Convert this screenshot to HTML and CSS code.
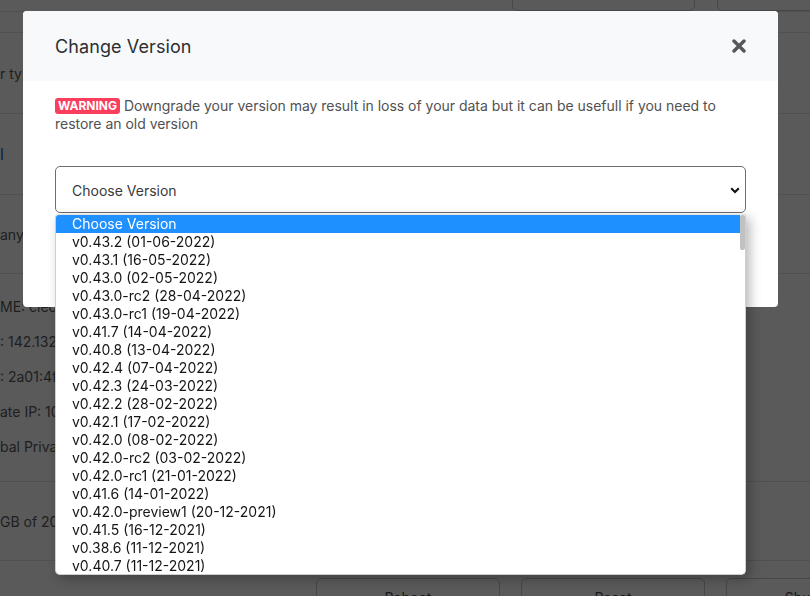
FILE: index.html
```html
<!DOCTYPE html>
<html>
<head>
<meta charset="utf-8">
<link rel="stylesheet" href="styles.css">
</head>
<body>
<div class="page">
  <div class="top-actions">
    <div class="pbtn"></div>
    <div class="pbtn"></div>
  </div>
  <div class="row row0"></div>
  <div class="row row1"><span class="cell">r type: CX21</span></div>
  <div class="row row2"><span class="cell link">l</span></div>
  <div class="row row3"><span class="cell">any, Falkenstein</span></div>
  <div class="row row4">
    <div class="cell lines">
      <span>ME: cleo-node</span>
      <span>: 142.132.18.44</span>
      <span>: 2a01:4f8:c17:1a2b::1</span>
      <span>ate IP: 10.0.0.2</span>
      <span>bal Private Network</span>
    </div>
  </div>
  <div class="row row5"><span class="cell">GB of 200 GB</span></div>
  <div class="bottom-actions">
    <div class="pbtn">Reboot</div>
    <div class="pbtn">Reset</div>
    <div class="pbtn">Shutdown</div>
  </div>
</div>

<div class="backdrop"></div>

<div class="modal">
  <div class="modal-head">
    <h2 class="modal-title">Change Version</h2>
    <svg class="close" width="14" height="14" viewBox="0 0 14 14">
      <path d="M2 2 L12 12 M12 2 L2 12" stroke="#575757" stroke-width="3.4" stroke-linecap="round"/>
    </svg>
  </div>
  <div class="modal-body">
    <p class="warn"><span class="badge">WARNING</span> Downgrade your version may result in loss of your data but it can be usefull if you need to restore an old version</p>
    <div class="select">
      <span>Choose Version</span>
      <svg class="chev" width="10" height="7" viewBox="0 0 10 7">
        <path d="M1.2 1.3 L5 5 L8.8 1.3" fill="none" stroke="#111" stroke-width="2.1"/>
      </svg>
    </div>
  </div>
</div>

<div class="dropdown">
  <div class="options">
    <div class="opt active">Choose Version</div>
    <div class="opt">v0.43.2 (01-06-2022)</div>
    <div class="opt">v0.43.1 (16-05-2022)</div>
    <div class="opt">v0.43.0 (02-05-2022)</div>
    <div class="opt">v0.43.0-rc2 (28-04-2022)</div>
    <div class="opt">v0.43.0-rc1 (19-04-2022)</div>
    <div class="opt">v0.41.7 (14-04-2022)</div>
    <div class="opt">v0.40.8 (13-04-2022)</div>
    <div class="opt">v0.42.4 (07-04-2022)</div>
    <div class="opt">v0.42.3 (24-03-2022)</div>
    <div class="opt">v0.42.2 (28-02-2022)</div>
    <div class="opt">v0.42.1 (17-02-2022)</div>
    <div class="opt">v0.42.0 (08-02-2022)</div>
    <div class="opt">v0.42.0-rc2 (03-02-2022)</div>
    <div class="opt">v0.42.0-rc1 (21-01-2022)</div>
    <div class="opt">v0.41.6 (14-01-2022)</div>
    <div class="opt">v0.42.0-preview1 (20-12-2021)</div>
    <div class="opt">v0.41.5 (16-12-2021)</div>
    <div class="opt">v0.38.6 (11-12-2021)</div>
    <div class="opt">v0.40.7 (11-12-2021)</div>
  </div>
  <div class="scrollbar"><div class="thumb"></div></div>
</div>
</body>
</html>
```

FILE: styles.css
```css
* { box-sizing: border-box; }
html, body { margin: 0; padding: 0; }
body {
  width: 810px;
  height: 596px;
  overflow: hidden;
  background: #fff;
  font-family: Inter, "Noto Sans", sans-serif;
}

/* background page */
.page {
  display: flex;
  flex-direction: column;
  width: 810px;
  height: 596px;
  overflow: hidden;
  color: #5a5a5a;
  font-size: 14px;
}
.top-actions {
  height: 11px;
  flex: none;
  display: flex;
  gap: 22px;
  padding-left: 512px;
  overflow: visible;
}
.top-actions .pbtn {
  width: 183px;
  height: 40px;
  margin-top: -29px;
  flex: none;
}
.pbtn {
  border: 1px solid #c9c9c9;
  border-radius: 5px;
  background: #fff;
}
.row {
  flex: none;
  display: flex;
  align-items: center;
  border-bottom: 1px solid #e2e2e2;
}
.row0 { height: 22px; border-top: 1px solid #e2e2e2; }
.row1 { height: 81px; }
.row2 { height: 81px; }
.row3 { height: 79px; }
.row4 { height: 208px; }
.row5 { height: 79px; }
.cell { white-space: nowrap; }
.link { color: #2563b8; font-size: 16px; }
.lines {
  display: flex;
  flex-direction: column;
  line-height: 35px;
  padding-bottom: 2px;
}
.bottom-actions {
  flex: none;
  display: flex;
  gap: 21px;
  padding: 17px 0 0 316px;
}
.bottom-actions .pbtn {
  width: 184px;
  height: 40px;
  flex: none;
  text-align: center;
  font-size: 14px;
  line-height: 38px;
  color: #4a4a4a;
}

/* backdrop */
.backdrop {
  position: fixed;
  inset: 0;
  background: rgba(0, 0, 0, 0.648);
}

/* modal */
.modal {
  position: absolute;
  left: 23px;
  top: 11px;
  width: 755px;
  height: 296px;
  background: #fff;
  border-radius: 4px;
  overflow: hidden;
}
.modal-head {
  height: 70px;
  background: #f8f9fa;
  display: flex;
  align-items: center;
  justify-content: space-between;
  padding: 0 32px;
}
.modal-title {
  margin: 0;
  font-size: 18px;
  font-weight: 400;
  color: #2b2f33;
  letter-spacing: 0.1px;
}
.close { display: block; }
.modal-body {
  padding: 16px 32px 0 32px;
}
.warn {
  margin: 0;
  font-size: 14px;
  line-height: 18px;
  color: #515151;
  letter-spacing: -0.02px;
}
.badge {
  display: inline-block;
  background: #fb3e5e;
  color: #fff;
  font-weight: 700;
  font-size: 12px;
  line-height: 16px;
  padding: 0 3px;
  border-radius: 3px;
  vertical-align: 1px;
}
.select {
  margin-top: 33px;
  height: 47px;
  border: 1px solid #6e6e6e;
  border-radius: 5px;
  display: flex;
  align-items: center;
  justify-content: space-between;
  padding: 1px 5px 0 16px;
  font-size: 14px;
  color: #3a3a3a;
}
.chev { display: block; }

/* open dropdown list */
.dropdown {
  position: absolute;
  left: 55px;
  top: 214px;
  width: 691px;
  height: 361px;
  background: #fff;
  border: 1px solid #cfcfcf;
  border-top: 1px solid #e4e4e4;
  border-radius: 4px 0 5px 5px;
  overflow: hidden;
  display: flex;
  box-shadow: 4px 4px 12px rgba(0, 0, 0, 0.28);
}
.options {
  flex: 1;
  display: flex;
  flex-direction: column;
}
.opt {
  height: 18px;
  line-height: 18px;
  padding-left: 16px;
  font-size: 14px;
  color: #151515;
  white-space: nowrap;
}
.opt.active {
  background: #1e90ff;
  color: #fff;
}
.scrollbar {
  width: 5px;
  flex: none;
  background: #fff;
}
.thumb {
  height: 35px;
  background: #c1c1c1;
  border-radius: 2px;
}
```
